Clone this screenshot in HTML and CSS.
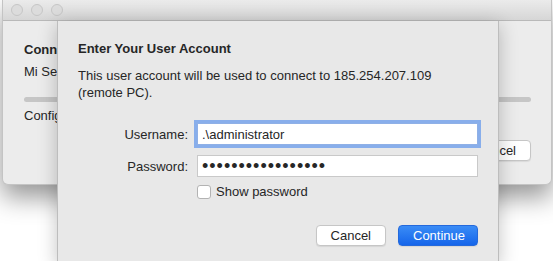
FILE: index.html
```html
<!DOCTYPE html>
<html lang="en">
<head>
  <meta charset="UTF-8">
  <title>Enter Your User Account</title>
  <link rel="stylesheet" href="styles.css">
</head>
<body>
  <div class="stage">
    <div class="window">
      <div class="titlebar">
        <span class="light"></span>
        <span class="light"></span>
        <span class="light"></span>
      </div>
      <div class="window-body">
        <div class="heading">Connecting to 185.254.207.109</div>
        <div class="subline">Mi Server</div>
        <div class="progress"></div>
        <div class="subline">Configuring remote session...</div>
        <div class="window-actions">
          <button class="btn">Cancel</button>
        </div>
      </div>
    </div>

    <!-- Sheet -->
    <div class="sheet">
      <div class="sheet-title">Enter Your User Account</div>
      <p class="sheet-text">This user account will be used to connect to 185.254.207.109 (remote PC).</p>

      <div class="form">
        <label class="form-label" for="user">Username:</label>
        <input class="field focused" id="user" type="text" value=".\administrator">
        <label class="form-label" for="pass">Password:</label>
        <input class="field secret" id="pass" type="password" value="12345678901234567">
        <span></span>
        <label class="check">
          <span class="check-box"></span>
          Show password
        </label>
      </div>

      <div class="sheet-actions">
        <button class="btn">Cancel</button>
        <button class="btn primary">Continue</button>
      </div>
    </div>
  </div>
</body>
</html>
```

FILE: styles.css
```css
html, body {
  margin: 0;
  padding: 0;
  background: #fff;
  font-family: "Liberation Sans", Arial, sans-serif;
  font-size: 13px;
  color: #262626;
}

.stage {
  position: relative;
  width: 553px;
  height: 261px;
  overflow: hidden;
}

/* Back window */
.window {
  margin-left: 2px;
  width: 548px;
  height: 184px;
  background: #ececec;
  border: 1px solid #c4c4c4;
  border-top: none;
  border-radius: 0 0 6px 6px;
  box-shadow: 0 12px 26px rgba(0,0,0,0.42);
}

.titlebar {
  height: 20px;
  display: flex;
  align-items: center;
  gap: 8px;
  padding-left: 8px;
  background: linear-gradient(#ebebeb, #d6d6d6);
  border-bottom: 1px solid #b9b9b9;
}

.light {
  box-sizing: border-box;
  width: 12px;
  height: 12px;
  border-radius: 50%;
  background: #dcdcdc;
  border: 1px solid #c6c6c6;
}

.window-body {
  padding: 21px 20px 0 21px;
}

.heading {
  font-weight: bold;
  line-height: 16px;
}

.subline {
  line-height: 16px;
  margin-top: 6px;
}

.progress {
  height: 5px;
  margin: 17px 0 3px;
  border-radius: 3px;
  background: #c6c6c6;
}

.window-actions {
  display: flex;
  justify-content: flex-end;
  margin-top: 16px;
}

/* Sheet */
.sheet {
  position: absolute;
  left: 57px;
  top: 21px;
  width: 400px;
  height: 221px;
  padding: 20px 20px 0 20px;
  background: #e8e8e8;
  border: 1px solid #bdbdbd;
  border-top: none;
  box-shadow: 0 4px 18px rgba(0,0,0,0.24);
}

.sheet-title {
  font-weight: bold;
  line-height: 16px;
}

.sheet-text {
  margin: 10px 0 0;
  line-height: 17px;
}

.form {
  display: grid;
  grid-template-columns: 110px 281px;
  column-gap: 9px;
  row-gap: 10px;
  align-items: center;
  margin-top: 22px;
}

.form-label {
  text-align: right;
}

.field {
  box-sizing: border-box;
  height: 22px;
  margin: 0;
  padding: 0 4px;
  border: 1px solid #c9c9c9;
  border-radius: 0;
  background: #fff;
  font-family: inherit;
  font-size: 13px;
  color: #262626;
  outline: none;
}

.field.focused {
  border-color: #8fb0e6;
  box-shadow: 0 0 0 3px rgba(84, 143, 236, 0.65);
}

.field.secret {
  font-size: 18px;
  letter-spacing: 1px;
}

.check {
  display: flex;
  align-items: center;
  gap: 5px;
  margin-top: -3px;
}

.check-box {
  box-sizing: border-box;
  width: 14px;
  height: 14px;
  border: 1px solid #b3b3b3;
  border-radius: 3px;
  background: #fff;
}

.sheet-actions {
  display: flex;
  justify-content: flex-end;
  gap: 12px;
  margin-top: 26px;
}

.btn {
  box-sizing: border-box;
  height: 21px;
  min-width: 70px;
  padding: 0 14px;
  border: 1px solid #c6c6c6;
  border-radius: 4px;
  background: #fff;
  font-family: inherit;
  font-size: 13px;
  color: #262626;
  box-shadow: 0 1px 1px rgba(0,0,0,0.08);
}

.btn.primary {
  width: 80px;
  border-color: #2469dc;
  background: linear-gradient(#3a8cf6, #1565ea);
  color: #fff;
}
```
